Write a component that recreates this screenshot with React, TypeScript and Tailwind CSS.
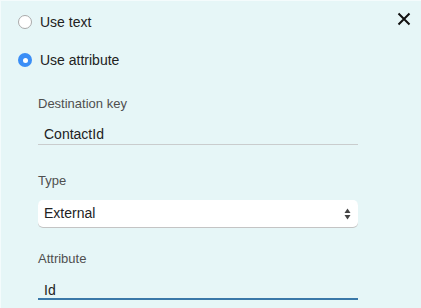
export default function App() {
  return (
    <div
      className="h-[308px] w-[421px] overflow-hidden border-l border-t border-[#f4fbfc] bg-[#e6f6f7] text-[#222]"
      style={{ fontFamily: '"Helvetica Neue", "Liberation Sans", Arial, sans-serif' }}
    >
      <div className="relative pt-[10px]">
        <button className="absolute right-[10px] top-[11px] text-[#111]">
          <svg width="14" height="14" viewBox="0 0 14 14">
            <path d="M1.5 1.5 L12.5 12.5 M12.5 1.5 L1.5 12.5" stroke="currentColor" strokeWidth="2" />
          </svg>
        </button>

        <label className="flex h-[22px] items-center gap-[8px] pl-[17px] text-[14px]">
          <span className="h-[14px] w-[14px] rounded-full border border-[#aaa] bg-white" />
          <span>Use text</span>
        </label>
        <label className="mt-[16px] flex h-[22px] items-center gap-[8px] pl-[17px] text-[14px]">
          <span className="flex h-[14px] w-[14px] items-center justify-center rounded-full bg-[#3a8ef6]">
            <span className="h-[5px] w-[5px] rounded-full bg-white" />
          </span>
          <span>Use attribute</span>
        </label>

        <div className="ml-[37px] w-[320px] pt-[23px]">
          <div className="text-[13px] font-medium text-[#4f4f4f]">Destination key</div>
          <div className="mt-[10px] border-b border-[#c9cccd] pl-[6px] text-[14px] leading-[20px]">ContactId</div>

          <div className="mt-[26px] text-[13px] font-medium text-[#4f4f4f]">Type</div>
          <div className="mt-[10px] flex h-[27px] items-center justify-between rounded-[5px] bg-white pl-[6px] pr-[7px] text-[14px] shadow-[0_1px_0_#c4c4c4]">
            <span>External</span>
            <svg width="7" height="12" viewBox="0 0 7 12">
              <path d="M3.5 0.5 L6.5 5 L0.5 5 Z" fill="#444" />
              <path d="M3.5 11.5 L6.5 7 L0.5 7 Z" fill="#444" />
            </svg>
          </div>

          <div className="mt-[22px] text-[13px] font-medium text-[#4f4f4f]">Attribute</div>
          <div className="mt-[13px] border-b-2 border-[#3a78a8] pl-[6px] text-[14px] leading-[16px]">Id</div>
        </div>
      </div>
    </div>
  )
}
